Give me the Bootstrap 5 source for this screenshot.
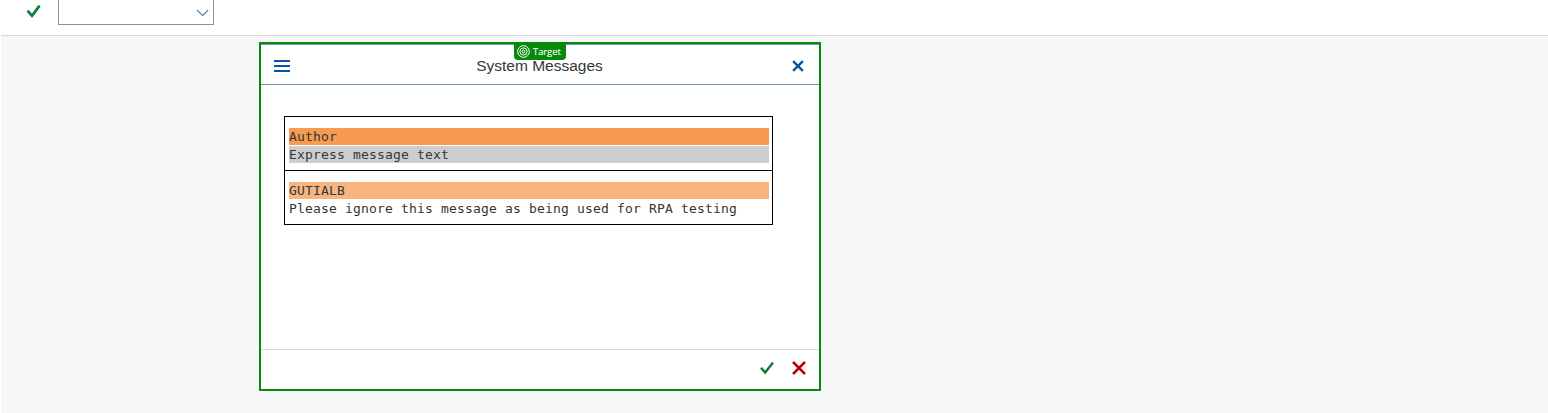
<!DOCTYPE html>
<html lang="en">
<head>
<meta charset="utf-8">
<meta name="viewport" content="width=device-width, initial-scale=1">
<title>System Messages</title>
<link href="https://cdn.jsdelivr.net/npm/bootstrap@5.3.0/dist/css/bootstrap.min.css" rel="stylesheet">
<style>
body{font-family:"Liberation Sans",Arial,sans-serif;color:#32363a;background:#f7f7f7;height:413px;overflow:hidden;border-left:1px solid #fff}
svg{display:block}
.topbar{height:36px;background:#fff;border-bottom:1px solid #d9d9d9;padding-left:24px}
.cmd{width:156px;height:25px;border:1px solid #89919a;border-top:0;margin-left:17px;padding-right:4px}
.dialog{width:562px;height:349px;margin:6px 0 0 258px;border:2px solid #078a0b;background:#fff}
.dialog-head{height:41px;border-top:1px solid #7895b5;border-bottom:1px solid #7296b9;padding:0 15px 0 13px}
.head-icon{margin-top:3px}
.dialog-title{font-size:15.5px;line-height:20px;white-space:nowrap;margin:2px 3px 0 0}
.target-tag{left:253px;top:-1px;width:52px;height:17px;background:#078a0b;border-radius:0 0 4px 4px;color:#fff;font:500 9.5px/16px "Open Sans",sans-serif;padding-left:3px;gap:3px}
.target-tag span{-webkit-text-stroke:.1px #fff;letter-spacing:-.1px;padding-top:1px}
.target-icon{margin-top:2px}
.dialog-body{padding:31px 0 0 23px}
.msg-table{width:489px;border:1px solid #000;font:13px/17px "DejaVu Sans Mono",monospace;letter-spacing:.174px;white-space:nowrap}
.msg-row{height:53px;padding:11px 3px 0 4px;gap:1px}
.msg-row+.msg-row{height:54px;border-top:1px solid #000}
.line{height:17px}
.head-author{background:#f69b4f}
.head-text{background:#cecece}
.row-author{background:#f9b57f}
.dialog-foot{height:40px;border-top:1px solid #d9d9d9;padding:0 13px 3px 0;gap:18px}
</style>
</head>
<body>
<div class="topbar d-flex align-items-start">
  <svg width="16" height="22" viewBox="0 0 16 22" fill="none" stroke="#107e3e" stroke-width="2.8"><path d="M2.6 10.6 7 15.8 14.6 5.6"/></svg>
  <div class="cmd d-flex justify-content-end">
    <svg width="13" height="20" viewBox="0 0 13 20" fill="none" stroke="#40699b" stroke-width="1.1"><path d="M1 10.2 6.6 15.6 12.2 10.2"/></svg>
  </div>
</div>
<div class="dialog d-flex flex-column position-relative">
  <div class="dialog-head d-flex align-items-center justify-content-between">
    <svg class="head-icon" width="16" height="12" viewBox="0 0 16 12" fill="#0854a0"><path d="M0 0h16v2H0zM0 5h16v2H0zM0 10h16v2H0z"/></svg>
    <div class="dialog-title">System Messages</div>
    <svg class="head-icon" width="12" height="12" viewBox="0 0 12 12" fill="none" stroke="#0854a0" stroke-width="2.3"><path d="M1.1 1.1 10.9 10.9M10.9 1.1 1.1 10.9"/></svg>
  </div>
  <div class="target-tag d-flex position-absolute">
    <svg class="target-icon" width="13" height="13" viewBox="0 0 13 13" fill="none" stroke="#fff"><circle cx="6.5" cy="6.5" r="5.8"/><circle cx="6.5" cy="6.5" r="3.6"/><circle cx="6.5" cy="6.5" r="1.4"/></svg>
    <span>Target</span>
  </div>
  <div class="dialog-body flex-grow-1">
    <div class="msg-table">
      <div class="msg-row d-flex flex-column">
        <div class="line head-author">Author</div>
        <div class="line head-text">Express message text</div>
      </div>
      <div class="msg-row d-flex flex-column">
        <div class="line row-author">GUTIALB</div>
        <div class="line">Please ignore this message as being used for RPA testing</div>
      </div>
    </div>
  </div>
  <div class="dialog-foot d-flex align-items-center justify-content-end">
    <svg width="14" height="14" viewBox="0 0 14 14" fill="none" stroke="#107e3e" stroke-width="2.5"><path d="M1 6.8 5.2 11.6 13 1.4"/></svg>
    <svg width="14" height="14" viewBox="0 0 14 14" fill="none" stroke="#bb0000" stroke-width="2.5"><path d="M1 1 13 13M13 1 1 13"/></svg>
  </div>
</div>
<script src="https://cdn.jsdelivr.net/npm/bootstrap@5.3.0/dist/js/bootstrap.bundle.min.js"></script>
</body>
</html>
